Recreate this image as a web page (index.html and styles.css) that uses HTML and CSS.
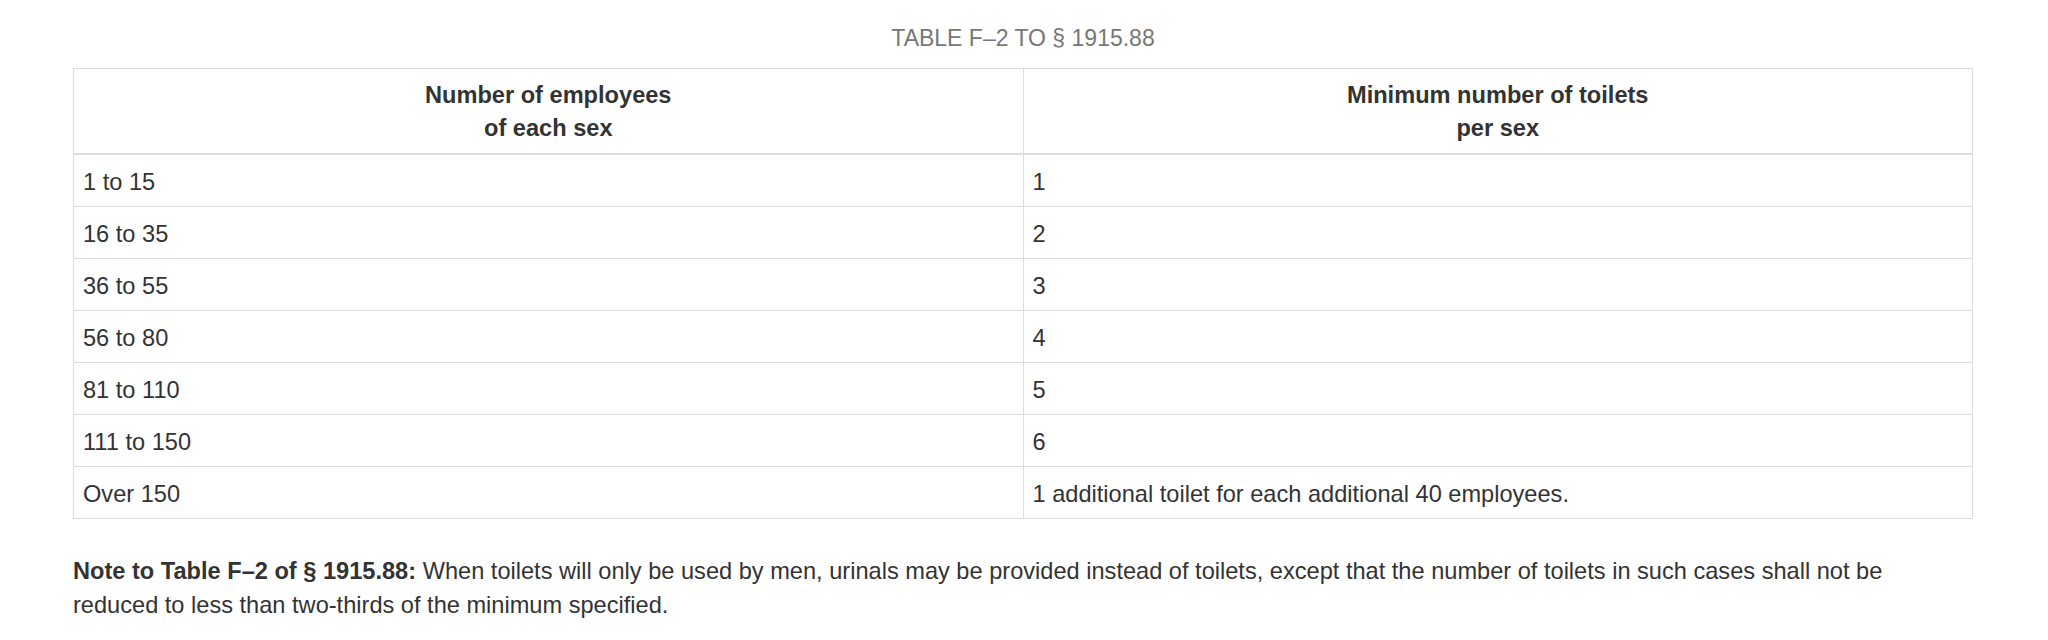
FILE: index.html
```html
<!DOCTYPE html>
<html lang="en">
<head>
<meta charset="utf-8">
<title>Table F-2 to § 1915.88</title>
<link rel="stylesheet" href="styles.css">
</head>
<body>
<div class="page">
  <table class="reg-table">
    <caption class="reg-caption">TABLE F–2 TO § 1915.88</caption>
    <thead>
      <tr>
        <th>Number of employees<br>of each sex</th>
        <th>Minimum number of toilets<br>per sex</th>
      </tr>
    </thead>
    <tbody>
      <tr><td>1 to 15</td><td>1</td></tr>
      <tr><td>16 to 35</td><td>2</td></tr>
      <tr><td>36 to 55</td><td>3</td></tr>
      <tr><td>56 to 80</td><td>4</td></tr>
      <tr><td>81 to 110</td><td>5</td></tr>
      <tr><td>111 to 150</td><td>6</td></tr>
      <tr><td>Over 150</td><td>1 additional toilet for each additional 40 employees.</td></tr>
    </tbody>
  </table>
  <p class="note"><strong>Note to Table F–2 of § 1915.88:</strong> When toilets will only be used by men, urinals may be provided instead of toilets, except that the number of toilets in such cases shall not be reduced to less than two-thirds of the minimum specified.</p>
</div>
</body>
</html>
```
FILE: styles.css
```css
html, body {
  margin: 0;
  padding: 0;
  background: #fff;
}
body {
  font-family: "Liberation Sans", Arial, Helvetica, sans-serif;
  font-size: 23.6px;
  line-height: 33px;
  color: #333;
}
.page {
  padding: 22px 75px 0 73px;
}
.reg-table {
  width: 100%;
  border-collapse: collapse;
  table-layout: fixed;
}
.reg-caption {
  caption-side: top;
  text-align: center;
  color: #777;
  font-size: 23px;
  padding: 0 0 13px;
  line-height: 33px;
}
.reg-table th,
.reg-table td {
  border: 1px solid #ddd;
  padding: 11px 9px 7px;
  vertical-align: top;
  text-align: left;
}
.reg-table th {
  text-align: center;
  font-weight: bold;
  border-bottom-width: 2px;
  padding: 10px 9px 8px;
  vertical-align: bottom;
}
.note {
  margin: 35px 0 0;
  line-height: 34px;
  max-width: 1880px;
}
.note strong {
  font-weight: bold;
}
```
